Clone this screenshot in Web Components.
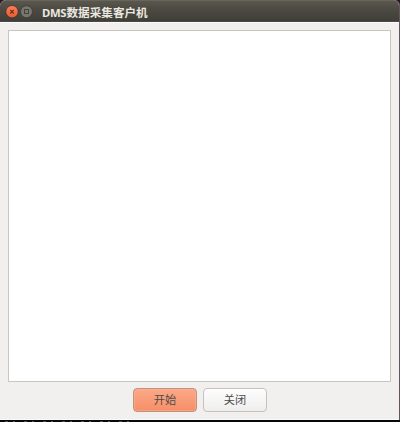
<!DOCTYPE html>
<html lang="zh">
<head>
<meta charset="utf-8">
<title>DMS数据采集客户机</title>
<style>
html,body{margin:0;height:100%;overflow:hidden;background:#2d1426}
body{font-family:"Noto Sans","Noto Sans CJK SC",sans-serif}
</style>
</head>
<body>
<app-window>
  <title-bar slot="title"><span class="latin">DMS</span>数据采集客户机</title-bar>
  <output-pane></output-pane>
  <push-button slot="actions" primary>开始</push-button>
  <push-button slot="actions">关闭</push-button>
</app-window>
<script>
const define = (name, html) => customElements.define(name, class extends HTMLElement {
  constructor() {
    super();
    this.attachShadow({mode: 'open'}).innerHTML = html;
  }
});

define('app-window', `<style>
:host{display:flex;flex-direction:column;width:400px;height:422px;box-sizing:border-box}
.frame{flex:1;min-height:0;display:flex;flex-direction:column;box-sizing:border-box;border-right:1px solid #63565f;background:#f1f0ee;border-radius:6px 6px 0 0;overflow:hidden}
.body{flex:1;min-height:0;display:flex;flex-direction:column;padding:7px 8px 8px;border-top:1px solid #fbfbfa;border-bottom:1px solid #fafafa}
.actions{display:flex;justify-content:center;gap:6px;margin-top:5.5px}
.desktop{height:2px;flex:none;background:repeating-linear-gradient(90deg,#0000 0 5px,#7779 5px 8px,#0000 8px 13px,#aaa7 13px 15px,#0000 15px 19px) 0 1px/130px 1px no-repeat #080808}
</style>
<div class="frame"><slot name="title"></slot><div class="body"><slot></slot><div class="actions"><slot name="actions"></slot></div></div></div>
<div class="desktop"></div>`);

define('title-bar', `<style>
:host{display:flex;align-items:center;height:22px;flex:none;box-sizing:border-box;padding-left:5px;background:linear-gradient(#5a574e,#4d4b43 35%,#3f3e38);border-top:1px solid #68655b;border-bottom:1px solid #4a4943}
svg{width:29px;height:16px;display:block;margin-top:1px}
.text{margin-left:8px;padding-top:3px;font:700 11.6px/16px "Noto Sans CJK SC",sans-serif;color:#ebe8e0;white-space:nowrap}
::slotted(.latin){font:700 11.3px/16px "Noto Sans",sans-serif;display:inline-block;width:24.5px;letter-spacing:-.3px}
</style>
<svg viewBox="0 0 29 16">
<defs><linearGradient id="o" x2="0" y2="1"><stop stop-color="#fa8059"/><stop offset="1" stop-color="#e9582f"/></linearGradient></defs>
<circle cx="7" cy="7.7" r="6.2" fill="url(#o)" stroke="#3b3832" stroke-width=".8"/>
<path d="M5.2 5.9l3.6 3.6M8.8 5.9l-3.6 3.6" stroke="#71301c" stroke-width="1.2"/>
<circle cx="21.5" cy="7.7" r="6" fill="#79766d" stroke="#3a3933" stroke-width=".8"/>
<rect x="19.5" y="5.5" width="4" height="4" fill="none" stroke="#45433d"/>
</svg><div class="text"><slot></slot></div>`);

define('output-pane', `<style>
:host{display:block;flex:none;height:352px;box-sizing:border-box;background:#fff;border:1px solid #c9c6c2}
</style>`);

define('push-button', `<style>
:host{display:flex;align-items:center;justify-content:center;width:64px;height:24px;box-sizing:border-box;padding:0 0 1px 1px;border:1px solid #c5c2be;border-radius:4px;background:linear-gradient(#fdfdfd,#efeeed);box-shadow:inset 0 1px #fff;color:#4c4c4c;font:400 11.2px/16px "Noto Sans CJK SC",sans-serif}
:host([primary]){border-color:#bf917f;background:linear-gradient(#fca887,#f68f68);box-shadow:inset 0 0 0 1px #fbb59a80}
</style><slot></slot>`);
</script>
</body>
</html>
